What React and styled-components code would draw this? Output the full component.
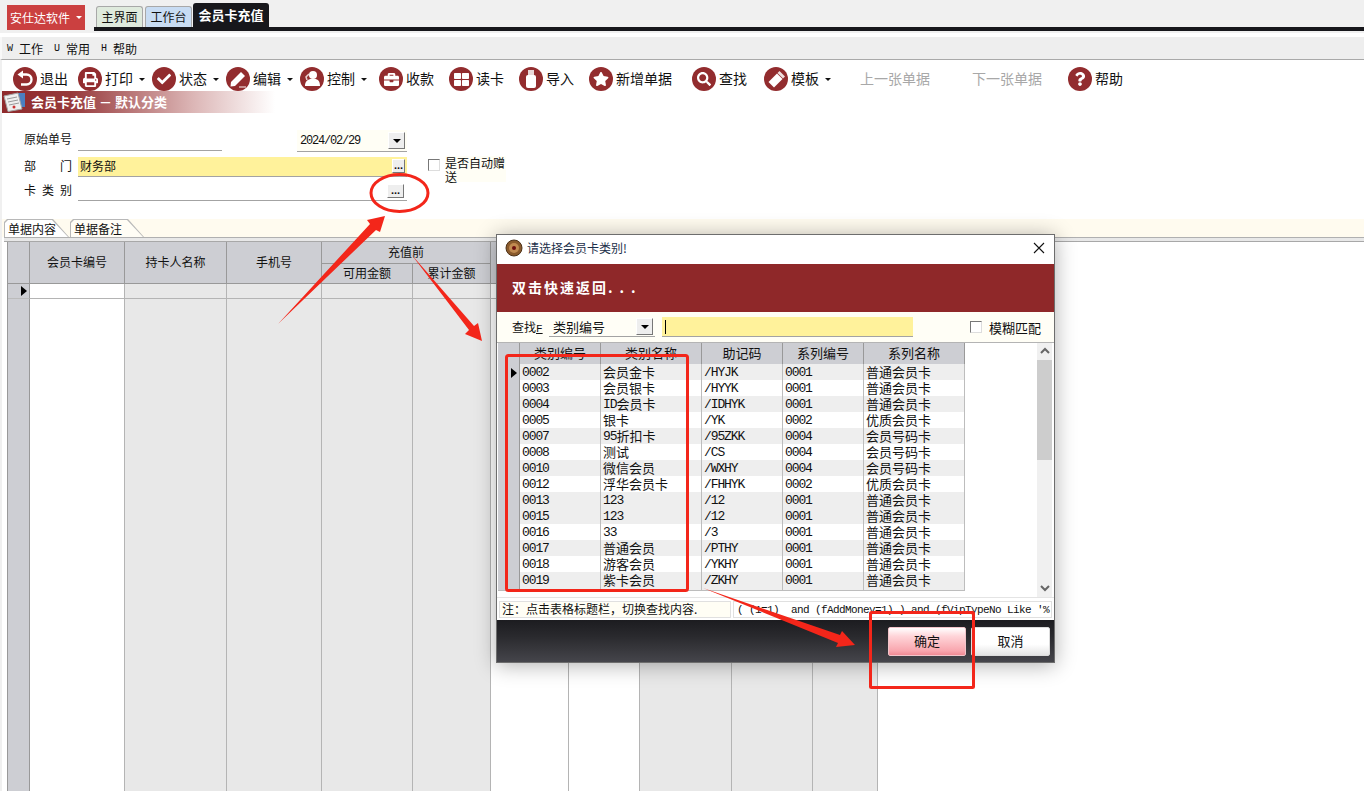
import styled, { createGlobalStyle } from 'styled-components'
import { FaPrint, FaCheck, FaBriefcase, FaThLarge, FaStar, FaSearch, FaQuestion } from 'react-icons/fa'

const GlobalStyle = createGlobalStyle`
html, body { margin: 0; padding: 0; background: #fff; }
* { box-sizing: border-box; }
body { font-family: "Noto Sans CJK SC", "Liberation Sans", sans-serif; font-size: 12px; color: #111; }
`

const BackGlyph = () => (
    <svg width="18" height="18" viewBox="0 0 18 18">
        <path d="M6 4.5 H10.5 a5 5 0 0 1 0 10 H5" fill="none" stroke="#fff" strokeWidth="2.4" />
        <path d="M7 0.5 L1.5 4.5 L7 8.5 Z" fill="#fff" />
    </svg>
)

const PenGlyph = () => (
    <svg width="20" height="20" viewBox="0 0 20 20">
        <path d="M3 13 L13 3 L17 7 L7 17 L2.5 17.5 Z" fill="#fff" />
        <path d="M11 18 H18" stroke="#d9b5b5" strokeWidth="1.5" />
    </svg>
)

const UserGlyph = () => (
    <svg width="20" height="20" viewBox="0 0 20 20">
        <circle cx="11" cy="6" r="4" fill="#fff" />
        <path d="M3 17 C3 12 6 11 8 10 L14 10 C16 11 18 12 18 17 Z" fill="#fff" />
        <path d="M7 5 L4 8 L5 11" fill="none" stroke="#e8d0d0" strokeWidth="1.5" />
    </svg>
)

const UsbGlyph = () => (
    <svg width="16" height="20" viewBox="0 0 16 20">
        <rect x="5" y="1" width="6" height="6" fill="#e9d9d9" />
        <rect x="3" y="6" width="10" height="13" rx="2" fill="#fff" />
    </svg>
)

const PencilGlyph = () => (
    <svg width="20" height="20" viewBox="0 0 20 20">
        <path d="M2.5 13 L11 4.5 L16.5 10 L8 18.5 Z" fill="#fff" />
        <path d="M11.5 4 L13.5 2 L19 7.5 L17 9.5 Z" fill="#f0dede" />
    </svg>
)

const TOOLS = [
    { w: 65, label: '退出', icon: <BackGlyph /> },
    { w: 74, label: '打印', icon: <FaPrint size={15} />, caret: true },
    { w: 74, label: '状态', icon: <FaCheck size={14} />, caret: true },
    { w: 74, label: '编辑', icon: <PenGlyph />, caret: true },
    { w: 79, label: '控制', icon: <UserGlyph />, caret: true },
    { w: 70, label: '收款', icon: <FaBriefcase size={15} /> },
    { w: 70, label: '读卡', icon: <FaThLarge size={15} /> },
    { w: 70, label: '导入', icon: <UsbGlyph /> },
    { w: 103, label: '新增单据', icon: <FaStar size={16} /> },
    { w: 72, label: '查找', icon: <FaSearch size={14} /> },
    { w: 96, label: '模板', icon: <PencilGlyph />, caret: true },
    { w: 112, label: '上一张单据', off: true },
    { w: 96, label: '下一张单据', off: true },
    { w: 70, label: '帮助', icon: <FaQuestion size={14} /> },
]

const CARD_ROWS = [
    ['0002', '会员金卡', '/HYJK', '0001', '普通会员卡', 0],
    ['0003', '会员银卡', '/HYYK', '0001', '普通会员卡', 1],
    ['0004', 'ID会员卡', '/IDHYK', '0001', '普通会员卡', 0],
    ['0005', '银卡', '/YK', '0002', '优质会员卡', 1],
    ['0007', '95折扣卡', '/95ZKK', '0004', '会员号码卡', 0],
    ['0008', '测试', '/CS', '0004', '会员号码卡', 1],
    ['0010', '微信会员', '/WXHY', '0004', '会员号码卡', 0],
    ['0012', '浮华会员卡', '/FHHYK', '0002', '优质会员卡', 1],
    ['0013', '123', '/12', '0001', '普通会员卡', 0],
    ['0015', '123', '/12', '0001', '普通会员卡', 0],
    ['0016', '33', '/3', '0001', '普通会员卡', 1],
    ['0017', '普通会员', '/PTHY', '0001', '普通会员卡', 0],
    ['0018', '游客会员', '/YKHY', '0001', '普通会员卡', 1],
    ['0019', '紫卡会员', '/ZKHY', '0001', '普通会员卡', 0],
]

// 0 = white column, 1 = grey column
const BODY_COLS = [0, 1, 1, 1, 1, 0, 0, 1, 1, 1]

// latin runs use the mono font so they keep the half-width look
const mixed = (text) =>
    text.split(/([\x20-\x7e]+)/).filter(Boolean).map((part, i) =>
        /^[\x20-\x7e]+$/.test(part) ? <Mono key={i}>{part}</Mono> : <span key={i}>{part}</span>
    )

const App = () => {
    return (
        <>
            <GlobalStyle />
            <Page>
                <TopBar>
                    <AppButton>安仕达软件<Caret $light /></AppButton>
                    <TabStrip>
                        <TopTab $bg="#dfeadd">主界面</TopTab>
                        <TopTab $bg="#c8dcf3">工作台</TopTab>
                        <ActiveTab>会员卡充值</ActiveTab>
                    </TabStrip>
                </TopBar>
                <MenuBar>
                    <MenuItem><Key>W</Key>工作</MenuItem>
                    <MenuItem><Key>U</Key>常用</MenuItem>
                    <MenuItem><Key>H</Key>帮助</MenuItem>
                </MenuBar>
                <Body>
                    <Toolbar>
                        {TOOLS.map((t) => (
                            <ToolItem key={t.label} $w={t.w} $off={t.off}>
                                {t.icon && <RoundIcon>{t.icon}</RoundIcon>}
                                <ToolText>{t.label}</ToolText>
                                {t.caret && <Caret />}
                            </ToolItem>
                        ))}
                    </Toolbar>
                    <TitleStrip>
                        <svg width="22" height="20" viewBox="0 0 22 20">
                            <rect x="15" y="1" width="7" height="14" fill="#4a7fc0" />
                            <path d="M1 4 L15 1 L19 17 L5 19.5 Z" fill="#efefef" stroke="#a5a5a5" />
                            <path d="M4 7 L14 5 M5 10 L15 8 M6 13 L16 11" stroke="#9a9a9a" />
                            <circle cx="11" cy="15" r="1.5" fill="#c33" />
                        </svg>
                        <TitleText>会员卡充值 － 默认分类</TitleText>
                    </TitleStrip>
                    <Form>
                        <FormRow $h={25}>
                            <FieldLabel $lift>原始单号</FieldLabel>
                            <Field $w={144} $lift />
                            <DateField>
                                <Mono>2024/02/29</Mono>
                                <DropButton />
                            </DateField>
                        </FormRow>
                        <FormRow $h={20} $push>
                            <FieldLabel $spread>
                                <span>部</span><span>门</span>
                            </FieldLabel>
                            <Field $w={329} $yellow>
                                财务部
                                <DotsButton $small>...</DotsButton>
                            </Field>
                            <CheckRow>
                                <CheckBox />
                                <CheckLabel>是否自动赠送</CheckLabel>
                            </CheckRow>
                        </FormRow>
                        <FormRow $h={20}>
                            <FieldLabel $spread>
                                <span>卡</span><span>类</span><span>别</span>
                            </FieldLabel>
                            <Field $w={329}>
                                <DotsButton>...</DotsButton>
                            </Field>
                        </FormRow>
                    </Form>
                    <TabBand>
                        <SheetTab $w={65} $active>单据内容</SheetTab>
                        <SheetTab $w={74}>单据备注</SheetTab>
                    </TabBand>
                    <TabRule />
                    <GridWrap>
                        <MainGrid>
                            <HeadCell $col="1" $row="1 / 3" />
                            <HeadCell $col="2" $row="1 / 3">会员卡编号</HeadCell>
                            <HeadCell $col="3" $row="1 / 3">持卡人名称</HeadCell>
                            <HeadCell $col="4" $row="1 / 3">手机号</HeadCell>
                            <HeadCell $col="5 / 7" $row="1">充值前</HeadCell>
                            <HeadCell $col="5" $row="2">可用金额</HeadCell>
                            <HeadCell $col="6" $row="2">累计金额</HeadCell>
                            <HeadCell $col="7 / 12" $row="1 / 3" />
                            <Indicator $col="1" $row="3"><Pointer /></Indicator>
                            <Indicator $col="1" $row="4" />
                            {BODY_COLS.map((grey, i) => (
                                <BodyCell key={'a' + i} $col={i + 2} $row="3" $grey={grey} />
                            ))}
                            {BODY_COLS.map((grey, i) => (
                                <BodyCell key={'b' + i} $col={i + 2} $row="4" $grey={grey} />
                            ))}
                        </MainGrid>
                    </GridWrap>
                </Body>

                <Dialog>
                    <DialogTitle>
                        <svg width="18" height="18" viewBox="0 0 18 18">
                            <circle cx="9" cy="9" r="8" fill="#8a5a2c" stroke="#4d3218" />
                            <circle cx="9" cy="9" r="5" fill="#c08a50" />
                            <circle cx="9" cy="9" r="2" fill="#6e1010" />
                        </svg>
                        <DialogTitleText>请选择会员卡类别!</DialogTitleText>
                        <CloseIcon width="12" height="12" viewBox="0 0 12 12">
                            <path d="M1 1 L11 11 M11 1 L1 11" stroke="#111" strokeWidth="1.1" />
                        </CloseIcon>
                    </DialogTitle>
                    <Banner>双击快速返回<BannerDots>...</BannerDots></Banner>
                    <SearchRow>
                        <SearchLabel>查找<u>F</u></SearchLabel>
                        <Combo>
                            类别编号
                            <DropButton />
                        </Combo>
                        <SearchInput><TextCaret /></SearchInput>
                        <FuzzyCheck>
                            <CheckBox />
                            <span>模糊匹配</span>
                        </FuzzyCheck>
                    </SearchRow>
                    <ListArea>
                        <CardTable>
                            <CardRow $head>
                                <CardHead />
                                <CardHead>类别编号</CardHead>
                                <CardHead>类别名称</CardHead>
                                <CardHead>助记码</CardHead>
                                <CardHead>系列编号</CardHead>
                                <CardHead>系列名称</CardHead>
                            </CardRow>
                            {CARD_ROWS.map((r, i) => (
                                <CardRow key={r[0]}>
                                    <CardMark>{i === 0 && <Pointer />}</CardMark>
                                    {r.slice(0, 5).map((v, j) => (
                                        <CardCell key={j} $white={r[5]}>{mixed(v)}</CardCell>
                                    ))}
                                </CardRow>
                            ))}
                        </CardTable>
                        <ScrollBar>
                            <ScrollArrow viewBox="0 0 12 8" width="12" height="8">
                                <path d="M2 6 L6 2 L10 6" fill="none" stroke="#666" strokeWidth="2" />
                            </ScrollArrow>
                            <ScrollThumb />
                            <ScrollArrow viewBox="0 0 12 8" width="12" height="8">
                                <path d="M2 2 L6 6 L10 2" fill="none" stroke="#666" strokeWidth="2" />
                            </ScrollArrow>
                        </ScrollBar>
                    </ListArea>
                    <StatusRow>
                        <NoteBox>注：点击表格标题栏，切换查找内容.</NoteBox>
                        <SqlBox>( (1=1)  and (fAddMoney=1) ) and (fVipTypeNo Like '%</SqlBox>
                    </StatusRow>
                    <DialogFooter>
                        <FooterButton $primary>确定</FooterButton>
                        <FooterButton>取消</FooterButton>
                    </DialogFooter>
                </Dialog>

                <Annotations width="1364" height="791" viewBox="0 0 1364 791">
                    <ellipse cx="399.5" cy="193" rx="28.5" ry="18.5" fill="none" stroke="#f3261a" strokeWidth="3" />
                    <polygon points="278,324 370,224 367,220 385,216 380,232 376,230" fill="#f3261a" />
                    <polygon points="411,254 474,326 478,323 482,341 465,334 469,330" fill="#f3261a" />
                    <polygon points="703,588 840,635 842,631 855,645 836,647 838,643" fill="#f3261a" />
                    <rect x="506.5" y="355.5" width="181" height="235" rx="2" fill="none" stroke="#f3261a" strokeWidth="3" />
                    <rect x="870.5" y="612.5" width="103" height="75" rx="1" fill="none" stroke="#f3261a" strokeWidth="3" />
                </Annotations>
            </Page>
        </>
    )
}

export default App

const Page = styled.div`
position: relative;
width: 1364px;
height: 791px;
overflow: hidden;
background: #fff;
display: flex;
flex-direction: column;`

const TopBar = styled.div`
height: 37px;
flex: none;
display: flex;
background: #f0f0f0;
padding: 5px 0 0 7px;
border-bottom: 4px solid #fff;`

const AppButton = styled.div`
width: 78px;
height: 25px;
background: #cb4040;
color: #fff;
display: flex;
align-items: center;
padding-left: 3px;
gap: 3px;
font-size: 12px;`

const TabStrip = styled.div`
flex: 1;
height: 27px;
margin-top: -1px;
margin-left: 9px;
padding-left: 2px;
display: flex;
align-items: flex-end;
gap: 2px;
border-bottom: 4px solid #17171b;`

const TopTab = styled.div`
width: 47px;
height: 21px;
padding-bottom: 2px;
border: 1px solid #a8a8a8;
border-bottom: none;
border-radius: 3px 3px 0 0;
background: ${(p) => p.$bg};
display: flex;
align-items: center;
justify-content: center;
font-size: 12px;`

const ActiveTab = styled.div`
width: 76px;
height: 24px;
margin-left: -1px;
padding-bottom: 2px;
border-radius: 3px 3px 0 0;
background: #17171b;
color: #fff;
font-weight: 700;
display: flex;
align-items: center;
justify-content: center;
font-size: 13px;`

const MenuBar = styled.div`
height: 23px;
flex: none;
background: #eeeeee;
border-left: 2px solid #f8f8f8;
border-bottom: 1px solid #a9a9a9;
display: flex;
align-items: center;
padding-left: 5px;
gap: 11px;`

const MenuItem = styled.div`
width: 36px;
white-space: nowrap;
display: flex;
align-items: center;
gap: 6px;`

const Key = styled.span`
font-family: "Liberation Mono", monospace;
font-size: 10px;
width: 6px;`

const Body = styled.div`
flex: 1;
min-height: 0;
display: flex;
flex-direction: column;
border-left: 2px solid #f0f0f0;`

const Toolbar = styled.div`
height: 31px;
flex: none;
display: flex;
align-items: flex-start;
padding: 7px 0 0 11px;`

const ToolItem = styled.div`
width: ${(p) => p.$w}px;
flex: none;
height: 24px;
display: flex;
align-items: center;
gap: 3px;
font-size: 14px;
color: ${(p) => (p.$off ? '#a8a8a8' : '#111')};`

const ToolText = styled.span`
margin-top: -2px;`

const RoundIcon = styled.div`
width: 24px;
height: 24px;
border-radius: 50%;
background: #922c2e;
color: #fff;
flex: none;
display: flex;
align-items: center;
justify-content: center;`

const Caret = styled.i`
width: 0;
height: 0;
margin-left: 3px;
border-left: 3px solid transparent;
border-right: 3px solid transparent;
border-top: 3px solid ${(p) => (p.$light ? '#fff' : '#111')};`

const TitleStrip = styled.div`
height: 22px;
width: 273px;
flex: none;
display: flex;
align-items: center;
padding-left: 1px;
gap: 6px;
background: linear-gradient(90deg, #8f2a2c 0%, #96383a 25%, #dcb6b6 70%, #fff 100%);`

const TitleText = styled.div`
color: #fff;
font-weight: 700;
font-size: 13px;
margin-top: -2px;
white-space: pre;`

const Form = styled.div`
height: 106px;
flex: none;
padding: 14px 0 0 22px;
display: flex;
flex-direction: column;
gap: 4px;`

const FormRow = styled.div`
height: ${(p) => p.$h}px;
margin-top: ${(p) => (p.$push ? '1px' : '0')};
display: flex;
align-items: flex-end;`

const FieldLabel = styled.div`
width: 48px;
margin-right: 6px;
height: 20px;
margin-bottom: ${(p) => (p.$lift ? '2px' : '0')};
padding-bottom: 3px;
align-self: flex-end;
display: flex;
align-items: center;
justify-content: ${(p) => (p.$spread ? 'space-between' : 'flex-start')};
white-space: nowrap;`

const Field = styled.div`
position: relative;
width: ${(p) => p.$w}px;
height: 20px;
margin-bottom: ${(p) => (p.$lift ? '1px' : '0')};
padding: 0 0 2px 2px;
display: flex;
align-items: center;
border-bottom: 1px solid #a3a3a3;
background: ${(p) => (p.$yellow ? '#fff29b' : 'transparent')};`

const DateField = styled.div`
margin-left: 75px;
width: 110px;
height: 22px;
padding-left: 3px;
display: flex;
align-items: center;
justify-content: space-between;
background: #fffef5;
border-bottom: 1px solid #a3a3a3;`

const Mono = styled.span`
font-family: "Liberation Mono", monospace;
font-size: 12px;
letter-spacing: -1.2px;
white-space: pre;`

const RaisedButton = styled.div`
background: #eeeeee;
border: 1px solid #fff;
border-right-color: #777;
border-bottom-color: #777;
display: flex;
align-items: center;
justify-content: center;`

const DropButton = styled(RaisedButton)`
width: 17px;
height: 17px;
margin-right: 2px;
&::after {
    content: "";
    border-left: 4px solid transparent;
    border-right: 4px solid transparent;
    border-top: 4px solid #000;
}`

const DotsButton = styled(RaisedButton)`
position: absolute;
right: ${(p) => (p.$small ? '2px' : '3px')};
top: ${(p) => (p.$small ? '2px' : '3px')};
width: ${(p) => (p.$small ? '13px' : '17px')};
height: 14px;
font-family: "Liberation Sans", sans-serif;
font-weight: 700;
font-size: 11px;
padding-bottom: 3px;`

const CheckRow = styled.div`
margin-left: 21px;
display: flex;
align-items: flex-start;
align-self: flex-start;
gap: 5px;`

const CheckBox = styled.div`
width: 12px;
height: 12px;
margin-top: 2px;
flex: none;
background: #fff;
border: 1px solid #777;
border-right-color: #ddd;
border-bottom-color: #ddd;`

const CheckLabel = styled.div`
width: 61px;
height: 26px;
background: #fffef5;
line-height: 14px;
margin-top: -1px;
overflow-wrap: anywhere;`

const TabBand = styled.div`
height: 18px;
flex: none;
padding-left: 2px;
display: flex;
background: #fffbef;`

const SheetTab = styled.div`
position: relative;
width: ${(p) => p.$w}px;
height: 18px;
margin-right: 1px;
padding: 2px 0 0 4px;
line-height: 15px;
font-size: 12px;
isolation: isolate;
&::before {
    content: "";
    position: absolute;
    inset: 0;
    z-index: -2;
    background: #b8b8b8;
    clip-path: polygon(0 100%, 0 3px, 3px 0, calc(100% - 16px) 0, 100% 100%);
}
&::after {
    content: "";
    position: absolute;
    inset: 1px 1px 0 1px;
    z-index: -1;
    background: ${(p) => (p.$active ? '#fff' : '#fffdf5')};
    clip-path: polygon(0 100%, 0 3px, 3px 0, calc(100% - 16px) 0, 100% 100%);
}`

const TabRule = styled.div`
height: 5px;
flex: none;
margin-left: 2px;
background: #e8e8e8;
border-top: 1px solid #b0b0b0;
border-bottom: 1px solid #a8a8a8;`

const GridWrap = styled.div`
flex: none;
padding-left: 5px;`

const MainGrid = styled.div`
width: 871px;
height: 640px;
display: grid;
grid-template-columns: 22px 95px 102px 95px 91px 78px 78px 71px 92px 81px 65px;
grid-template-rows: 22px 20px 15px 1fr;
border-left: 1px solid #999;`

const HeadCell = styled.div`
grid-column: ${(p) => p.$col};
grid-row: ${(p) => p.$row};
background: #cdced3;
border-right: 1px solid #999;
border-bottom: 1px solid #999;
padding-bottom: 2px;
display: flex;
align-items: center;
justify-content: center;
font-size: 12px;`

const Indicator = styled.div`
grid-column: ${(p) => p.$col};
grid-row: ${(p) => p.$row};
background: #cdced3;
border-right: 1px solid #999;
border-bottom: 1px solid #bbb;
display: flex;
align-items: center;
justify-content: center;`

const BodyCell = styled.div`
grid-column: ${(p) => p.$col};
grid-row: ${(p) => p.$row};
background: ${(p) => (p.$grey ? '#e8e8e8' : '#fff')};
border-right: 1px solid #b4b4b4;
border-bottom: 1px solid #b4b4b4;`

const Pointer = styled.i`
width: 0;
height: 0;
margin-left: 10px;
border-top: 5px solid transparent;
border-bottom: 5px solid transparent;
border-left: 6px solid #000;`

const Dialog = styled.div`
position: absolute;
left: 496px;
top: 234px;
width: 559px;
height: 429px;
display: flex;
flex-direction: column;
background: #fff;
border: 1px solid #6d6d6d;
box-shadow: 0 2px 20px rgba(0, 0, 0, 0.32);`

const DialogTitle = styled.div`
height: 29px;
flex: none;
display: flex;
align-items: center;
padding: 0 9px 3px 8px;
gap: 4px;
background: #fff;`

const DialogTitleText = styled.div`
flex: 1;
color: #1c2f4a;
font-size: 12px;
margin-top: -2px;`

const CloseIcon = styled.svg`
flex: none;`

const Banner = styled.div`
height: 48px;
flex: none;
display: flex;
align-items: center;
padding: 0 0 3px 15px;
background: #8f2829;
color: #fff;
font-size: 14px;
font-weight: 700;
letter-spacing: 2px;`

const BannerDots = styled.span`
letter-spacing: 7px;`

const SearchRow = styled.div`
height: 30px;
flex: none;
display: flex;
align-items: center;
background: #fffef6;
padding-left: 15px;`

const SearchLabel = styled.div`
width: 37px;
margin-top: -2px;
u { font-family: "Liberation Mono", monospace; font-size: 11px; }`

const Combo = styled.div`
width: 106px;
height: 20px;
padding: 0 0 0 4px;
display: flex;
align-items: center;
justify-content: space-between;
font-size: 13px;
border-bottom: 1px solid #a3a3a3;`

const SearchInput = styled.div`
margin-left: 7px;
width: 251px;
height: 20px;
padding-left: 3px;
background: #fff29b;
border-bottom: 1px solid #a3a3a3;
display: flex;
align-items: center;`

const TextCaret = styled.i`
width: 1px;
height: 14px;
background: #000;`

const FuzzyCheck = styled.div`
margin-left: 57px;
display: flex;
align-items: center;
gap: 7px;
font-size: 13px;
${CheckBox} { margin-top: 0; }`

const ListArea = styled.div`
height: 255px;
flex: none;
display: flex;
justify-content: space-between;
padding-left: 1px;
border-top: 1px solid #b4b4b4;`

const CardTable = styled.div`
width: 467px;
display: flex;
flex-direction: column;`

const CardRow = styled.div`
display: grid;
grid-template-columns: 22px 81px 101px 81px 81px 101px;
height: ${(p) => (p.$head ? '21px' : '16px')};`

const CardHead = styled.div`
background: #cdced3;
border-right: 1px solid #999;
border-bottom: 1px solid #999;
padding-bottom: 3px;
display: flex;
align-items: center;
justify-content: center;
font-size: 13px;`

const CardMark = styled.div`
background: #cdced3;
border-right: 1px solid #999;
border-bottom: 1px solid #bbb;
display: flex;
align-items: center;
justify-content: center;`

const CardCell = styled.div`
background: ${(p) => (p.$white ? '#fff' : '#eeeeee')};
border-right: 1px solid #bdbdbd;
border-bottom: 1px solid #bdbdbd;
display: flex;
align-items: center;
padding: 0 0 2px 2px;
font-size: 13px;
line-height: 14px;
white-space: nowrap;
${Mono} {
    font-size: 13px;
    letter-spacing: -1.1px;
    padding-top: 2px;
}`

const ScrollBar = styled.div`
width: 15px;
margin-right: 2px;
background: #f0f0f0;
display: flex;
flex-direction: column;
align-items: center;`

const ScrollArrow = styled.svg`
flex: none;
margin: 4px 0 5px;`

const ScrollThumb = styled.div`
width: 100%;
height: 100px;
background: #cdcdcd;
margin-bottom: auto;`

const StatusRow = styled.div`
height: 23px;
flex: none;
display: flex;
gap: 2px;
padding: 3px 2px 2px 2px;
border-top: 1px solid #e4e4e4;`

const NoteBox = styled.div`
width: 232px;
background: #fffef5;
border: 1px solid #e0e0e0;
display: flex;
align-items: center;
padding: 0 0 2px 2px;
white-space: nowrap;`

const SqlBox = styled.div`
flex: 1;
min-width: 0;
overflow: hidden;
background: #fff;
border: 1px solid #e0e0e0;
display: flex;
align-items: center;
padding-left: 3px;
font-family: "Liberation Mono", monospace;
font-size: 11px;
letter-spacing: -0.6px;
white-space: pre;`

const DialogFooter = styled.div`
flex: 1;
display: flex;
justify-content: flex-end;
align-items: center;
gap: 5px;
padding: 1px 4px 0 0;
background: linear-gradient(180deg, #1c1c20 0%, #2a2a2e 40%, #45454b 100%);`

const FooterButton = styled.div`
width: ${(p) => (p.$primary ? '78px' : '79px')};
height: 29px;
border: 1px solid ${(p) => (p.$primary ? '#f2c4ca' : '#ddd')};
border-radius: 2px;
padding-bottom: 2px;
display: flex;
align-items: center;
justify-content: center;
font-size: 13px;
background: ${(p) => p.$primary
        ? 'linear-gradient(180deg, #fff 0%, #ffd5d9 30%, #f8a5ad 85%, #f08a94 100%)'
        : 'linear-gradient(180deg, #fff 0%, #fff 60%, #e4e4e4 100%)'};`

const Annotations = styled.svg`
position: absolute;
left: 0;
top: 0;
pointer-events: none;`
